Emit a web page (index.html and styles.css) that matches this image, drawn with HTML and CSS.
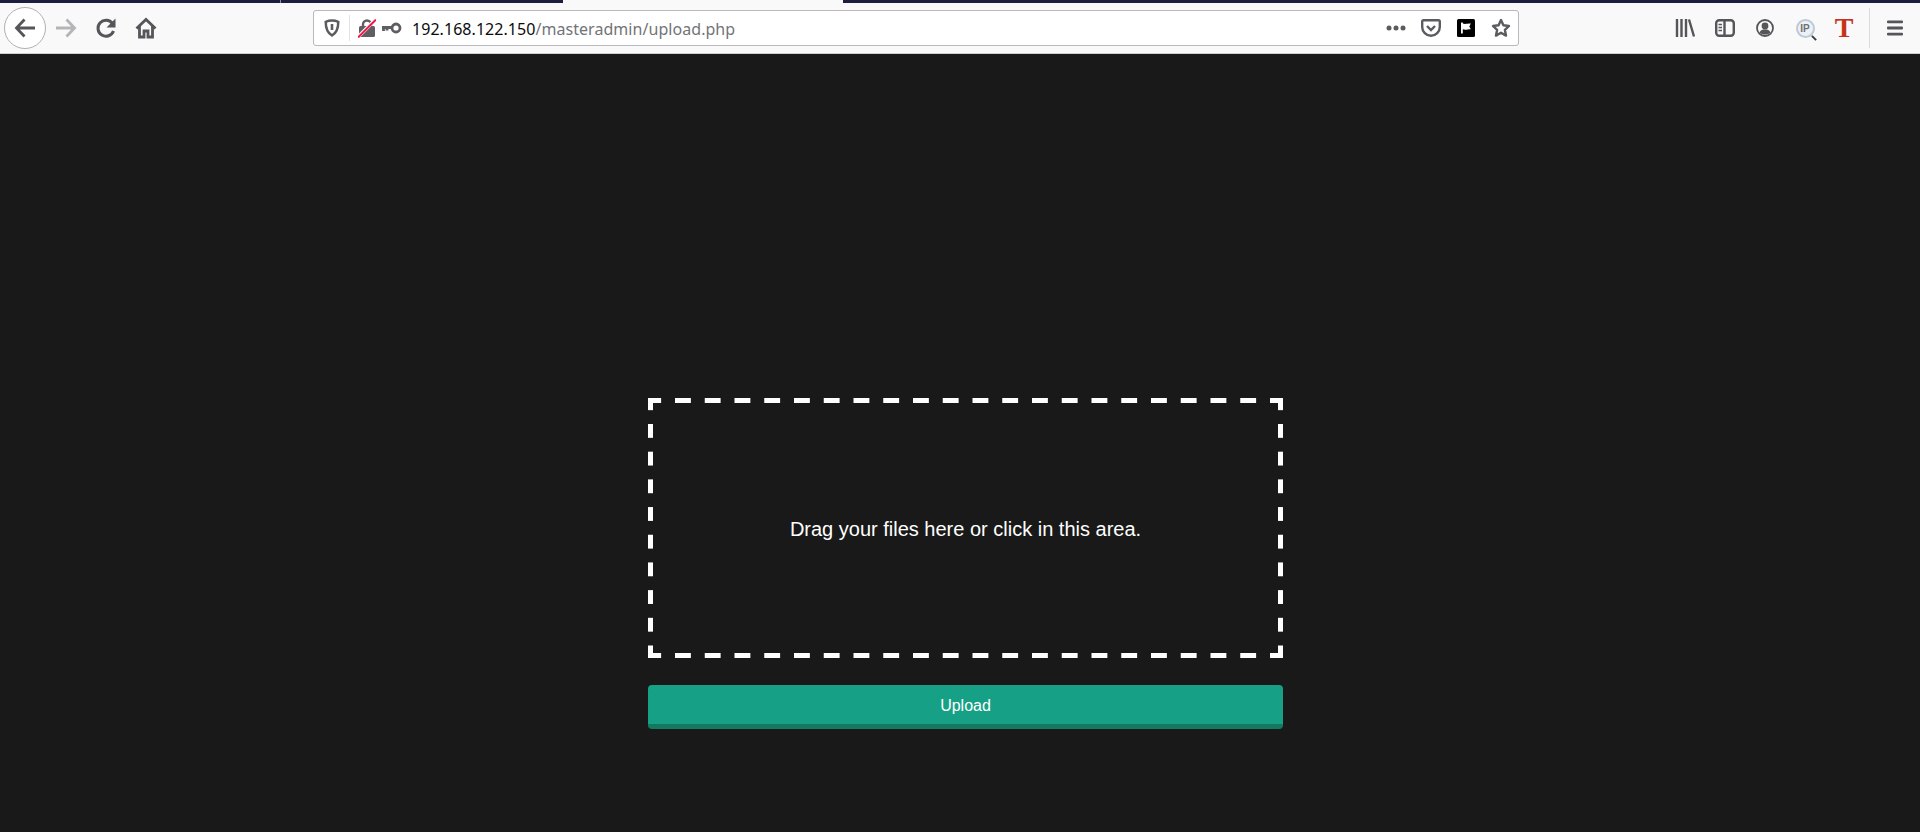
FILE: index.html
```html
<!doctype html>
<html lang="en">
<head>
	<meta charset="utf-8">
	<title>Upload</title>
	<link rel="stylesheet" href="styles.css">
</head>
<body>

	<!-- tab strip, only the bottom edge of it is visible -->
	<div class="tabstrip">
		<div class="tab-edge tab-first"></div>
		<div class="tab-edge tab-second"></div>
		<div class="tab-active"></div>
		<div class="tab-edge tab-rest"></div>
	</div>

	<div class="toolbar">
		<div class="nav-icons">
			<div class="back-btn">
				<svg width="24" height="24" viewBox="0 0 24 24" fill="none" stroke="#55555a" stroke-width="2.800"><path d="M22 12H3.500M11.500 3.500L3.500 12l8 8.500"/></svg>
			</div>
			<div class="icon-btn">
				<svg width="24" height="24" viewBox="0 0 24 24" fill="none" stroke="#b5b5b7" stroke-width="2.800"><path d="M2 12h18.500M12.500 3.500l8 8.500-8 8.500"/></svg>
			</div>
			<div class="icon-btn">
				<svg width="22" height="22" viewBox="0 0 22 22" fill="none" stroke="#55555a" stroke-width="3"><path d="M17.500 6.500A8 8 0 1 0 18.500 14"/><path d="M20.500 1.500v9h-9z" fill="#55555a" stroke="none"/></svg>
			</div>
			<div class="icon-btn">
				<svg width="22" height="22" viewBox="0 0 22 22" fill="none" stroke="#55555a" stroke-width="2.800"><path d="M1.500 11.500L11 2.500l9.500 9"/><path d="M4.500 9v11h4.500v-6h4v6h4.500V9"/></svg>
			</div>
		</div>

		<div class="urlbar">
			<div class="url-shield">
				<svg width="16" height="18" viewBox="0 0 16 18" fill="none"><path d="M8 1.500c2.500 0 4.500.5 6.300 1.300 0 6.200-1.500 11-6.300 13.700C3.200 13.800 1.700 9 1.700 2.800 3.500 2 5.500 1.500 8 1.500z" stroke="#5b5b60" stroke-width="2.500"/><path d="M8 5v6" stroke="#5b5b60" stroke-width="2.600"/></svg>
			</div>
			<div class="url-sep"></div>
			<div class="url-lock">
				<svg width="18" height="20" viewBox="0 0 18 20"><path d="M5 9V6.500a4 4 0 0 1 8 0V9" fill="none" stroke="#5f5f63" stroke-width="2.400"/><rect x="1" y="8" width="16" height="11" rx="1.500" fill="#5f5f63"/><path d="M0 19L18 1" stroke="#fff" stroke-width="3.500"/><path d="M0 19.500L18 1.500" stroke="#f01b48" stroke-width="2"/></svg>
			</div>
			<div class="url-key">
				<svg width="21" height="12" viewBox="0 0 21 12" fill="none" stroke="#5f5f63"><circle cx="15" cy="6" r="4" stroke-width="2.800"/><path d="M11 5.500H1M2.500 5.500v3.500M6 5.500v3" stroke-width="2.800"/></svg>
			</div>
			<div class="url-text"><span class="url-host">192.168.122.150</span>/masteradmin/upload.php</div>
			<div class="url-actions">
				<div class="url-action">
					<svg width="20" height="6" viewBox="0 0 20 6" fill="#5b5b60"><circle cx="3" cy="3" r="2.500"/><circle cx="10" cy="3" r="2.500"/><circle cx="17" cy="3" r="2.500"/></svg>
				</div>
				<div class="url-action">
					<svg width="20" height="18" viewBox="0 0 20 18" fill="none" stroke="#5b5b60" stroke-width="2.400"><path d="M2.500 1.200h15a1.300 1.300 0 0 1 1.300 1.300V8a8.800 8.800 0 0 1-17.600 0V2.500a1.300 1.300 0 0 1 1.300-1.300z"/><path d="M6 7l4 4 4-4" stroke-width="2.400"/></svg>
				</div>
				<div class="url-action">
					<svg width="18" height="18" viewBox="0 0 18 18"><rect width="18" height="18" rx="1.500" fill="#000"/><path d="M4 3.500h1.800v11H4zM5.800 4.500c2.500 1 4 0 8 0L12.300 7.500l1.500 2.800c-3.500 0-5.500 1-8 0z" fill="#fff"/></svg>
				</div>
				<div class="url-action">
					<svg width="20" height="20" viewBox="0 0 20 20" fill="none" stroke="#5b5b60" stroke-width="2.400" stroke-linejoin="round"><path d="M10 2l2.400 5.300 5.600.7-4.100 3.900 1.100 5.700-5-2.900-5 2.900 1.100-5.700L2 8l5.600-.7z"/></svg>
				</div>
			</div>
		</div>

		<div class="tool-icons">
			<div class="icon-btn">
				<svg width="20" height="18" viewBox="0 0 20 18" fill="none" stroke="#55555a" stroke-width="2.400"><path d="M2 0v18M6.500 0v18M11 0v18M14 .5l5 17"/></svg>
			</div>
			<div class="icon-btn">
				<svg width="20" height="18" viewBox="0 0 20 18" fill="none" stroke="#55555a" stroke-width="2.400"><rect x="1.200" y="1.200" width="17.600" height="15.600" rx="3"/><path d="M9.500 1v16"/><path d="M3.500 5.500h3.500M3.500 8.500h3.500M3.500 11.500h3.500" stroke-width="1.600"/></svg>
			</div>
			<div class="icon-btn">
				<svg width="18" height="18" viewBox="0 0 18 18"><circle cx="9" cy="9" r="8" fill="none" stroke="#55555a" stroke-width="1.800"/><circle cx="9" cy="7" r="3.400" fill="#55555a"/><path d="M3.500 13.500c1-2.500 3-3 5.500-3s4.500.5 5.500 3c-1.500 1.500-3.500 2-5.500 2s-4-.5-5.500-2z" fill="#55555a"/></svg>
			</div>
			<div class="icon-btn ip-btn">
				<div class="ip-lens">IP</div>
				<div class="ip-handle"></div>
			</div>
			<div class="icon-btn t-btn">T</div>
			<div class="tool-sep"></div>
			<div class="icon-btn">
				<svg width="16" height="16" viewBox="0 0 16 16" fill="#55555a"><rect width="16" height="2.800" y="0.500" rx="1"/><rect width="16" height="2.800" y="6.600" rx="1"/><rect width="16" height="2.800" y="12.700" rx="1"/></svg>
			</div>
		</div>
	</div>

	<div class="page">
		<form class="upload-form">
			<div class="dropzone">
				<p>Drag your files here or click in this area.</p>
			</div>
			<button type="button" class="upload-btn">Upload</button>
		</form>
	</div>

</body>
</html>
```

FILE: styles.css
```css
html, body {
	margin: 0;
	padding: 0;
	height: 100%;
}
body {
	display: flex;
	flex-direction: column;
	height: 832px;
	overflow: hidden;
	background-color: #191919;
	font-family: "Liberation Sans", Arial, sans-serif;
}

/*****/

.tabstrip {
	display: flex;
	height: 3px;
	background-color: #f9f9fa;
}
.tab-edge {
	background-color: #1b1e3d;
}
.tab-first {
	width: 280px;
	border-right: 1px solid #8c8fa3;
}
.tab-second {
	width: 282px;
}
.tab-active {
	width: 280px;
}
.tab-rest {
	flex: 1;
}

.toolbar {
	display: flex;
	align-items: center;
	height: 50px;
	background-color: #f9f9fa;
	border-bottom: 1px solid #cfcfd1;
}
.nav-icons {
	display: flex;
	align-items: center;
	padding-left: 4px;
	width: 309px;
	flex-shrink: 0;
}
.back-btn {
	display: flex;
	align-items: center;
	justify-content: center;
	width: 40px;
	height: 40px;
	border: 1px solid #b1b1b3;
	border-radius: 50%;
	background-color: #fff;
	flex-shrink: 0;
}
.icon-btn {
	display: flex;
	align-items: center;
	justify-content: center;
	width: 40px;
	height: 40px;
	flex-shrink: 0;
}

.urlbar {
	display: flex;
	align-items: center;
	width: 1204px;
	height: 34px;
	background-color: #fff;
	border: 1px solid #b9b9bb;
	border-radius: 3px;
	flex-shrink: 0;
}
.url-shield {
	display: flex;
	justify-content: center;
	width: 35px;
}
.url-sep {
	width: 1px;
	height: 26px;
	background-color: #e3e3e5;
}
.url-lock {
	display: flex;
	justify-content: center;
	width: 34px;
}
.url-key {
	display: flex;
	width: 28px;
	margin-left: -3px;
	margin-right: 3px;
}
.url-text {
	flex: 1;
	padding-top: 2px;
	font-family: "Noto Sans", "Open Sans", sans-serif;
	font-size: 16px;
	letter-spacing: 0.05px;
	color: #737378;
}
.url-host {
	color: #0c0c0d;
}
.url-actions {
	display: flex;
	align-items: center;
}
.url-action {
	display: flex;
	align-items: center;
	justify-content: center;
	width: 35px;
}

.tool-icons {
	display: flex;
	align-items: center;
	margin-left: 146px;
}
.tool-sep {
	width: 1px;
	height: 40px;
	margin: 0 5px 0 4px;
	background-color: #dcdcde;
}
.ip-btn {
	position: relative;
}
.ip-lens {
	display: flex;
	align-items: center;
	justify-content: center;
	width: 15px;
	height: 15px;
	border: 2px solid #bccadb;
	border-radius: 50%;
	background-color: #eef1f4;
	font-size: 10px;
	font-weight: bold;
	color: #6f6f74;
}
.ip-handle {
	position: absolute;
	left: 26px;
	top: 29px;
	width: 6px;
	height: 2px;
	background-color: #3c3c40;
	transform: rotate(45deg);
}
.t-btn {
	padding-right: 2px;
	box-sizing: border-box;
	font-family: "Liberation Serif", "Times New Roman", serif;
	font-size: 28px;
	font-weight: bold;
	color: #c8321c;
}

/*****/

.page {
	flex: 1;
	display: flex;
	justify-content: center;
	align-items: flex-start;
	padding: 344px 0 0 11px;
}
.upload-form {
	display: flex;
	flex-direction: column;
	width: 635px;
}
/* the long dashes can't be had from border: dashed, so they are painted */
.dropzone {
	display: flex;
	align-items: center;
	justify-content: center;
	box-sizing: border-box;
	height: 260px;
	padding-top: 2px;
	background-image:
		linear-gradient(to right, #fff 15.500px, transparent 15.500px),
		linear-gradient(to right, #fff 15.500px, transparent 15.500px),
		linear-gradient(to bottom, #fff 14px, transparent 14px),
		linear-gradient(to bottom, #fff 14px, transparent 14px);
	background-size: 29.750px 5px, 29.750px 5px, 5px 27.700px, 5px 27.700px;
	background-position: -2.750px 0, -2.750px 100%, 0 -1.700px, 100% -1.700px;
	background-repeat: repeat-x, repeat-x, repeat-y, repeat-y;
}
.dropzone p {
	margin: 0;
	font-size: 20px;
	color: #fff;
}
.upload-btn {
	box-sizing: border-box;
	height: 44px;
	margin-top: 27px;
	padding: 3px 0 0;
	border: 0;
	border-bottom: 5px solid #13795f;
	border-radius: 4px;
	background-color: #16a085;
	font-family: "Liberation Sans", Arial, sans-serif;
	font-size: 16px;
	color: #fff;
}
```
